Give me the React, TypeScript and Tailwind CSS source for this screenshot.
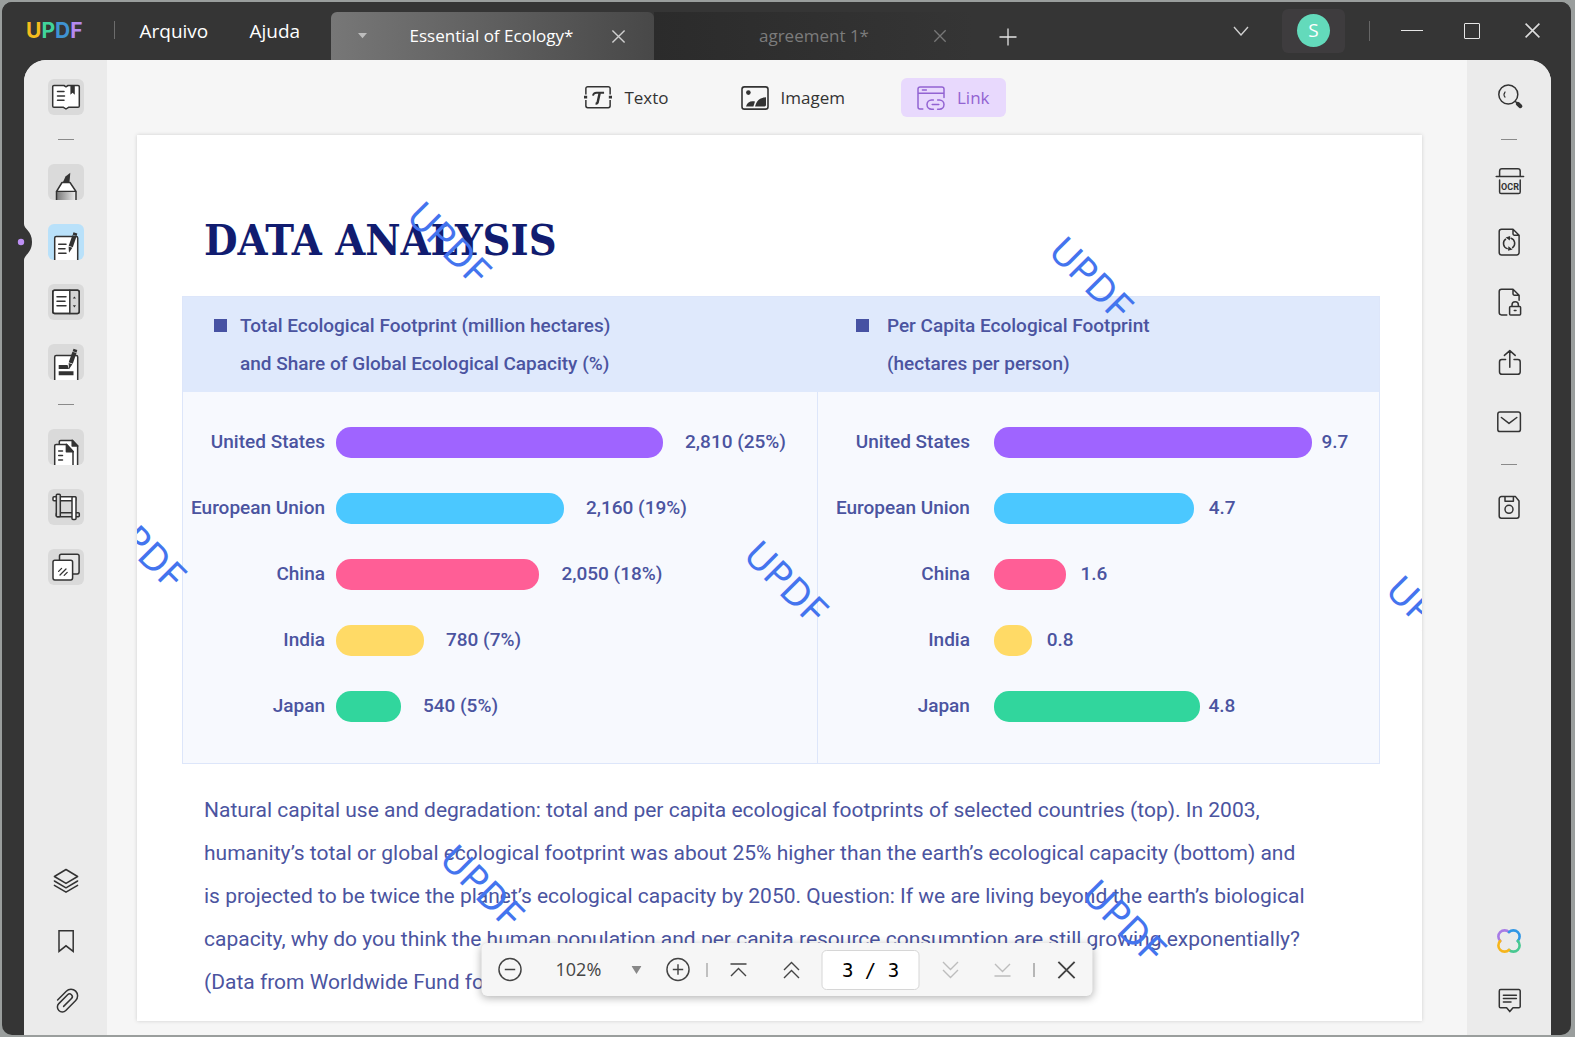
import type { ReactNode } from "react";

const INK = "#333333";

function Icon({ children, size = "size-9" }: { children: ReactNode; size?: string }) {
  return (
    <svg
      viewBox="0 0 36 36"
      className={size}
      fill="none"
      stroke={INK}
      strokeWidth="1.5"
      strokeLinecap="round"
      strokeLinejoin="round"
      aria-hidden="true"
    >
      {children}
    </svg>
  );
}

function Pen({ dy = 0 }: { dy?: number }) {
  return (
    <g transform={`translate(0 ${dy})`} fill={INK} stroke="none">
      <path d="M25.5 8.2 29.3 9.4 28.6 12 24.7 10.8Z" />
      <path d="M24.4 11.2 28.5 12.4 24.8 23.2 20.7 21.8Z" />
      <path d="M20.6 22.4 24.4 23.8 21 28.8Z" />
    </g>
  );
}

const leftTools: { label: string; active?: boolean; dividerAfter?: boolean; art: ReactNode }[] = [
  {
    label: "Leitor",
    dividerAfter: true,
    art: (
      <>
        <path
          d="M6 6.5H16L18 7.8 20 6.5H30a1.3 1.3 0 0 1 1.3 1.3V27a1.3 1.3 0 0 1-1.3 1.3H20.5L18 30 15.5 28.3H6A1.3 1.3 0 0 1 4.7 27V7.8A1.3 1.3 0 0 1 6 6.5Z"
          fill="#fff"
        />
        <path d="M22.4 6.5h4.4v9.3l-2.2-2-2.2 2Z" fill={INK} stroke="none" />
        <path d="M9.5 12.6H16M9.5 17H16.5M9.5 21.3H16" />
      </>
    ),
  },
  {
    label: "Comentar",
    art: (
      <>
        <defs>
          <linearGradient id="barrel" x1="0" x2="1">
            <stop offset="0" stopColor="#777" />
            <stop offset="1" stopColor="#eee" />
          </linearGradient>
        </defs>
        <path d="M15 18 17.5 12.5 22.3 8.7 21.5 18Z" fill={INK} stroke="none" />
        <path d="M14 18.5H22L28 27.5H8.5Z" fill="#fff" />
        <rect x="8.5" y="28" width="19.5" height="8" fill="url(#barrel)" stroke="none" />
        <path d="M8.5 27.5V36M28 27.5V36" strokeLinecap="butt" />
      </>
    ),
  },
  {
    label: "Editar PDF",
    active: true,
    art: (
      <>
        <path d="M6.7 36V14a1.5 1.5 0 0 1 1.5-1.5H28.2a1.5 1.5 0 0 1 1.5 1.5V36" fill="#fff" strokeLinecap="butt" />
        <path d="M10.7 20.2H18M10.7 24.8H17M10.7 29.3H18" />
        <Pen />
      </>
    ),
  },
  {
    label: "Formulário",
    art: (
      <>
        <rect x="4.8" y="6.2" width="26.4" height="23.2" rx="1.8" fill="#fff" />
        <path d="M21.8 7H30.4V28.7H21.8Z" fill="#d5d5d5" stroke="none" />
        <rect x="4.8" y="6.2" width="26.4" height="23.2" rx="1.8" />
        <path d="M21.8 6.2V29.4M9 12.7H18M9 17.2H17M9 21.8H18" />
        <path d="M24.8 14.6 26.4 12.4 28 14.6ZM24.8 21.2 26.4 23.4 28 21.2Z" fill={INK} stroke="none" />
      </>
    ),
  },
  {
    label: "Redigir",
    dividerAfter: true,
    art: (
      <>
        <path d="M6.7 36V13a1.5 1.5 0 0 1 1.5-1.5H28.2a1.5 1.5 0 0 1 1.5 1.5V36" fill="#fff" strokeLinecap="butt" />
        <path d="M10.7 21H19.5L21 25H10.7ZM10.7 27.2H25.5V31.3H10.7Z" fill={INK} stroke="none" />
        <Pen dy={-3.5} />
      </>
    ),
  },
  {
    label: "Organizar páginas",
    art: (
      <>
        <path d="M11.3 36V12.8a1.4 1.4 0 0 1 1.4-1.4H24.5L29.6 17V36" fill="#fff" strokeLinecap="butt" />
        <path d="M24.2 11.2V17H29.8Z" fill={INK} />
        <path d="M6.7 36V16.8a1.4 1.4 0 0 1 1.4-1.4H18.6L25 22.5V36" fill="#fff" strokeLinecap="butt" />
        <path d="M18.4 15.4V22.8H25.2Z" fill={INK} />
        <path d="M10.7 22H14.5M10.7 26.4H14.5M10.7 30.9H14.5" />
      </>
    ),
  },
  {
    label: "Cortar páginas",
    art: (
      <>
        <rect x="5" y="7.8" width="22.8" height="4" rx="1" fill="#fff" />
        <rect x="8.3" y="23.8" width="23" height="4" rx="1" fill="#d5d5d5" />
        <rect x="24" y="7.8" width="4" height="22.6" rx="1" fill="#fff" />
        <rect x="8.3" y="5.3" width="4" height="22.5" rx="1" fill="#d5d5d5" />
      </>
    ),
  },
  {
    label: "Marca d'água",
    art: (
      <>
        <rect x="11.5" y="5.3" width="19.6" height="19.6" rx="1.8" fill="#e6e6e6" />
        <rect x="5" y="11.3" width="19.6" height="19.6" rx="1.8" fill="#fff" />
        <path d="M10.6 22.4 13.6 19.4M12 26 18 20M16.2 26.4 19.2 23.4" strokeWidth="1.3" />
      </>
    ),
  },
];

const leftBottom: { label: string; art: ReactNode }[] = [
  {
    label: "Camadas",
    art: <path d="M18 6.5 29.6 13.5 18 20.4 6.4 13.5ZM6.4 18 18 24.8 29.6 18M6.4 22.4 18 29.2 29.6 22.4" />,
  },
  { label: "Marcadores", art: <path d="M11 7.7H25.2V28.4L18 22.8 11 28.4Z" strokeLinejoin="miter" /> },
  {
    label: "Anexos",
    art: (
      <path d="M9.6 17 18.3 8.2A6.6 6.6 0 0 1 27.7 17.5L17.8 27.5A4.9 4.9 0 0 1 10.8 20.6L19.6 11.8A2.7 2.7 0 0 1 23.5 15.6L15.6 23.4" />
    ),
  },
];

const rightTools: { label: string; dividerAfter?: boolean; art: ReactNode }[] = [
  {
    label: "Pesquisar",
    dividerAfter: true,
    art: (
      <>
        <circle cx="17.3" cy="15.5" r="9.5" />
        <path d="M14 13A4 4 0 0 0 14 18" strokeWidth="1.2" />
        <path d="M24.2 22.2 26 24" />
        <path d="M26.8 24.8 29.4 27.2" strokeWidth="4" />
      </>
    ),
  },
  {
    label: "OCR",
    art: (
      <>
        <path d="M8.6 12.6V7A2.3 2.3 0 0 1 10.9 4.8H26.9A2.3 2.3 0 0 1 29.2 7V12.6M5.2 12.6H32.6M8.6 16V28A1.6 1.6 0 0 0 10.2 29.6H27.6A1.6 1.6 0 0 0 29.2 28V16" />
        <text
          x="19"
          y="25.6"
          textAnchor="middle"
          fontFamily="Roboto, sans-serif"
          fontWeight="700"
          fontSize="9"
          fill={INK}
          stroke="none"
        >
          OCR
        </text>
      </>
    ),
  },
  {
    label: "Converter PDF",
    art: (
      <>
        <path d="M22 5.3H10.5A2.3 2.3 0 0 0 8.2 7.6V28.6A2.3 2.3 0 0 0 10.5 30.9H25.8A2.3 2.3 0 0 0 28.1 28.6V11.2ZM22 5.3V9.8A1.4 1.4 0 0 0 23.4 11.2H28.1" />
        <path d="M16.2 24.6A5.4 5.4 0 0 1 14.6 15.2M20 14.2A5.4 5.4 0 0 1 21.6 23.6" />
        <path d="M14.6 13.5 19.2 12 18.8 16.6ZM21.6 25.4 17 26.8 17.4 22.2Z" fill={INK} stroke="none" />
      </>
    ),
  },
  {
    label: "Proteger",
    art: (
      <>
        <path d="M15.8 30.9H10.5A2.3 2.3 0 0 1 8.2 28.6V7.6A2.3 2.3 0 0 1 10.5 5.3H22L28.1 11.2V16.2M22 5.3V9.8A1.4 1.4 0 0 0 23.4 11.2H28.1" />
        <rect x="18.6" y="22.4" width="11" height="8.5" rx="1" />
        <path d="M21 22.2V21A3.2 3.2 0 0 1 27.4 21V22.2M23.3 26.4H25" />
      </>
    ),
  },
  {
    label: "Compartilhar",
    art: (
      <path d="M14.6 15.6H10.8A2.3 2.3 0 0 0 8.5 17.9V28A2.3 2.3 0 0 0 10.8 30.3H26.9A2.3 2.3 0 0 0 29.2 28V17.9A2.3 2.3 0 0 0 26.9 15.6H23M18.8 23.3V6.8M13.4 11.4 18.8 6.6 24.2 11.4" />
    ),
  },
  {
    label: "Enviar por e-mail",
    dividerAfter: true,
    art: (
      <>
        <rect x="6.8" y="8" width="22.6" height="19.6" rx="2.2" />
        <path d="M10.4 13.5 18 19.4 25.8 13.5" />
      </>
    ),
  },
  {
    label: "Salvar",
    art: (
      <>
        <path d="M10.5 7.6H24.5L28 12V27A2.2 2.2 0 0 1 25.8 29.2H10.4A2.2 2.2 0 0 1 8.2 27V9.9A2.2 2.2 0 0 1 10.5 7.6ZM14 7.6V12.2H22.4V7.6" />
        <circle cx="18" cy="20.3" r="4" />
      </>
    ),
  },
];

const rightBottom: { label: string; art: ReactNode }[] = [
  {
    label: "UPDF AI",
    art: (
      <g strokeWidth="2.6">
        <path d="M9.2 18A6.2 6.2 0 1 1 18 9.2" stroke="#a77be6" />
        <path d="M18 9.2A6.2 6.2 0 1 1 26.8 18" stroke="#3097e6" />
        <path d="M26.8 18A6.2 6.2 0 1 1 18 26.8" stroke="#48c891" />
        <path d="M18 26.8A6.2 6.2 0 1 1 9.2 18" stroke="#f6b51c" />
      </g>
    ),
  },
  {
    label: "Comentários",
    art: (
      <path d="M9.6 6.6H27.9A1.3 1.3 0 0 1 29.2 7.9V23.4A1.3 1.3 0 0 1 27.9 24.7H22L18.8 28.6 15.6 24.7H9.6A1.3 1.3 0 0 1 8.3 23.4V7.9A1.3 1.3 0 0 1 9.6 6.6ZM12.4 12.2H25.4M12.4 15.6H25.4M12.4 19H20" />
    ),
  },
];

type Row = { name: string; value: string; share: number; color: string };

const total: Row[] = [
  { name: "United States", value: "2,810 (25%)", share: 68, color: "#9f64ff" },
  { name: "European Union", value: "2,160 (19%)", share: 47.4, color: "#4bc8ff" },
  { name: "China", value: "2,050 (18%)", share: 42.3, color: "#ff5e96" },
  { name: "India", value: "780 (7%)", share: 18.3, color: "#ffda66" },
  { name: "Japan", value: "540 (5%)", share: 13.5, color: "#31d69d" },
];

const perCapita: Row[] = [
  { name: "United States", value: "9.7", share: 82.7, color: "#9f64ff" },
  { name: "European Union", value: "4.7", share: 51.9, color: "#4bc8ff" },
  { name: "China", value: "1.6", share: 18.6, color: "#ff5e96" },
  { name: "India", value: "0.8", share: 9.8, color: "#ffda66" },
  { name: "Japan", value: "4.8", share: 53.4, color: "#31d69d" },
];

function BarRow({ row, label, gap }: { row: Row; label: string; gap: string }) {
  return (
    <li className="flex h-[66px] items-center">
      <span className={`shrink-0 text-right whitespace-nowrap ${label}`}>{row.name}</span>
      <div className="flex min-w-0 flex-1 items-center">
        <div
          className="h-[31px] shrink-0 rounded-[15px]"
          style={{ width: `${row.share}%`, backgroundColor: row.color }}
        />
        <span className={`whitespace-nowrap ${gap}`}>{row.value}</span>
      </div>
    </li>
  );
}

function Watermark({ place }: { place: string }) {
  return (
    <span
      className={`pointer-events-none absolute -translate-x-1/2 -translate-y-1/2 rotate-45 font-['Noto_Sans',sans-serif] text-[38px] leading-none text-[#4474ee] ${place}`}
    >
      UPDF
    </span>
  );
}

function Divider() {
  return <div className="h-px w-4 shrink-0 bg-[#8a8a8a]" />;
}

function Cross({ size, color }: { size: string; color: string }) {
  return (
    <svg viewBox="0 0 16 16" className={size} stroke={color} strokeWidth="1.5" fill="none" aria-hidden="true">
      <path d="M1.5 1.5 14.5 14.5M14.5 1.5 1.5 14.5" />
    </svg>
  );
}

function TitleBar() {
  return (
    <header className="flex h-[58px] shrink-0 items-start bg-[#353535] pr-[30px] text-[19px] text-white">
      <div className="flex h-[57px] items-center pl-6 font-['Inter',sans-serif] text-[21px] font-bold" aria-label="UPDF">
        <span className="text-[#f5bd1d]">U</span>
        <span className="text-[#41d39b]">P</span>
        <span className="text-[#3f93d3]">D</span>
        <span className="text-[#b58af0]">F</span>
      </div>
      <div className="mt-[19px] ml-8 h-[18px] w-px bg-[#6c6c6c]" />
      <button className="ml-6 h-[58px] w-[67px] text-left">Arquivo</button>
      <button className="ml-[43px] h-[58px] w-[50px] text-left">Ajuda</button>
      <div className="mt-[10px] ml-8 flex h-12 w-[323px] items-center rounded-tl-md rounded-tr-md bg-linear-to-r from-[#777777] to-[#484848] text-[17px]">
        <svg viewBox="0 0 10 8" className="ml-[27px] w-[9px]" fill="#bdbdbd" aria-hidden="true">
          <path d="M0 1H10L5 7Z" />
        </svg>
        <span className="flex-1 pl-1 text-center">Essential of Ecology*</span>
        <button aria-label="Fechar Essential of Ecology" className="mr-7">
          <Cross size="size-[15px]" color="#cfcfcf" />
        </button>
      </div>
      <div className="mt-[10px] flex h-12 w-[321px] items-center rounded-tr-md bg-linear-to-r from-[#2b2b2b] to-[#353535] text-[17px] text-[#7c7c7c]">
        <span className="flex-1 pl-10 text-center">agreement 1*</span>
        <button aria-label="Fechar agreement 1" className="mr-7">
          <Cross size="size-[14px]" color="#777777" />
        </button>
      </div>
      <button aria-label="Nova aba" className="mt-[26px] ml-6">
        <svg viewBox="0 0 18 18" className="size-[18px]" stroke="#e4e4e4" strokeWidth="1.3" aria-hidden="true">
          <path d="M9 0.5V17.5M0.5 9H17.5" />
        </svg>
      </button>
      <div className="ml-auto flex h-[57px] items-center">
        <button aria-label="Lista de abas">
          <svg viewBox="0 0 16 10" className="w-4" stroke="#cfcfcf" strokeWidth="1.4" fill="none" aria-hidden="true">
            <path d="M1 1 8 9 15 1" />
          </svg>
        </button>
        <button aria-label="Conta" className="ml-[33px] flex h-11 w-[63px] items-center justify-center rounded-md bg-[#3e3c3e]">
          <span className="flex size-[33px] items-center justify-center rounded-full bg-[#63dabb] text-[19px]">S</span>
        </button>
        <div className="ml-6 h-5 w-px bg-[#666666]" />
        <button aria-label="Minimizar" className="ml-[31px] flex h-5 w-[22px] items-center">
          <span className="h-px w-full bg-[#e6e6e6]" />
        </button>
        <button aria-label="Maximizar" className="ml-[41px] size-4 rounded-[1px] border border-[#e6e6e6]" />
        <button aria-label="Fechar" className="ml-[44px]">
          <Cross size="size-[17px]" color="#dcdcdc" />
        </button>
      </div>
    </header>
  );
}

function EditBar() {
  return (
    <div className="flex h-[75px] shrink-0 items-center justify-center gap-[40px] text-[17px] text-[#333333]">
      <button className="flex h-[39px] items-center gap-3 px-4">
        <svg viewBox="0 0 30 24" className="w-[28px]" fill="none" stroke={INK} strokeWidth="1.6" aria-hidden="true">
          <path d="M2 9V2.8A2 2 0 0 1 4 .8H26A2 2 0 0 1 28 2.8V9M2 15V21.2A2 2 0 0 0 4 23.2H26A2 2 0 0 0 28 21.2V15" />
          <path d="M0 12H3.4M26.6 12H30" strokeWidth="3" />
          <path d="M9.6 10.4C10 7.6 11.5 7.2 13.5 7.2H21.5" strokeWidth="2" />
          <path d="M16.8 7.4 14.6 17.8C14.4 18.8 13.4 18.8 12.4 18.6" strokeWidth="2.6" />
        </svg>
        Texto
      </button>
      <button className="flex h-[39px] items-center gap-3 px-4">
        <svg viewBox="0 0 28 24" className="w-7" fill="none" stroke={INK} strokeWidth="1.6" aria-hidden="true">
          <rect x="1" y=".9" width="26" height="22.2" rx="2.4" />
          <circle cx="7.4" cy="6.6" r="2.3" fill={INK} stroke="none" />
          <path d="M5 20.4C6.4 15.8 10 14.6 14 15.6L12.4 20.4Z" fill={INK} stroke="none" />
          <path d="M14 20.4C15.6 14.4 19 11.4 25 11.2V19A1.4 1.4 0 0 1 23.6 20.4Z" fill={INK} stroke="none" />
        </svg>
        Imagem
      </button>
      <button className="flex h-[39px] items-center gap-3 rounded-md bg-[#e8d9fd] px-4 text-[#9263d2]">
        <svg viewBox="0 0 28 24" className="w-7" fill="none" stroke="#9263d2" strokeWidth="1.5" strokeLinecap="round" aria-hidden="true">
          <path d="M5.8 23H3A2 2 0 0 1 1 21V3A2.2 2.2 0 0 1 3.2.9H24.8A2.2 2.2 0 0 1 27 3V11.4M1 7.2H27M5.4 4H9.4" />
          <path d="M16.4 14H14.6A4.6 4.6 0 0 0 14.6 23.2H16.4M20.6 14H22.4A4.6 4.6 0 0 1 22.4 23.2H20.6M15.2 18.6H21.8" />
        </svg>
        Link
      </button>
    </div>
  );
}

function PageControls() {
  return (
    <div className="absolute bottom-[39px] left-1/2 flex h-[53px] -translate-x-1/2 items-center rounded-md bg-[#f6f6f6] pr-4 pl-4 text-[#444444] shadow-[0_2px_8px_rgba(0,0,0,0.3)]">
      <button aria-label="Diminuir zoom">
        <svg viewBox="0 0 24 24" className="size-[25px]" fill="none" stroke="#444" strokeWidth="1.4" aria-hidden="true">
          <circle cx="12" cy="12" r="10.6" />
          <path d="M7 12H17" />
        </svg>
      </button>
      <button className="ml-[33px] flex items-center gap-7 text-[18px]">
        <span className="w-[48px] text-left">102%</span>
        <svg viewBox="0 0 10 8" className="w-[10px]" fill="#888" aria-hidden="true">
          <path d="M0 0H10L5 8Z" />
        </svg>
      </button>
      <button aria-label="Aumentar zoom" className="ml-6">
        <svg viewBox="0 0 24 24" className="size-[25px]" fill="none" stroke="#444" strokeWidth="1.4" aria-hidden="true">
          <circle cx="12" cy="12" r="10.6" />
          <path d="M7 12H17M12 7V17" />
        </svg>
      </button>
      <div className="ml-4 h-[14px] w-px bg-[#8a8a8a]" />
      <button aria-label="Primeira página" className="ml-[22px]">
        <svg viewBox="0 0 18 16" className="w-[18px]" fill="none" stroke="#444" strokeWidth="1.4" aria-hidden="true">
          <path d="M1 2H17M1.5 14 9 6.5 16.5 14" />
        </svg>
      </button>
      <button aria-label="Página anterior" className="ml-[35px]">
        <svg viewBox="0 0 18 18" className="w-[18px]" fill="none" stroke="#444" strokeWidth="1.4" aria-hidden="true">
          <path d="M1.5 9 9 1.5 16.5 9M1.5 17 9 9.5 16.5 17" />
        </svg>
      </button>
      <input
        aria-label="Página"
        defaultValue="3 / 3"
        className="ml-[21px] h-10 w-[98px] rounded-[5px] border border-[#d6d6d6] bg-white text-center font-['DejaVu_Sans_Mono',monospace] text-[19px] text-black"
      />
      <button aria-label="Próxima página" className="ml-[22px]">
        <svg viewBox="0 0 18 18" className="w-[18px]" fill="none" stroke="#bdbdbd" strokeWidth="1.4" aria-hidden="true">
          <path d="M1.5 1 9 8.5 16.5 1M1.5 9 9 16.5 16.5 9" />
        </svg>
      </button>
      <button aria-label="Última página" className="ml-[34px]">
        <svg viewBox="0 0 18 16" className="w-[18px]" fill="none" stroke="#bdbdbd" strokeWidth="1.4" aria-hidden="true">
          <path d="M1.5 2 9 9.5 16.5 2M1 14H17" />
        </svg>
      </button>
      <div className="ml-[22px] h-[14px] w-px bg-[#777777]" />
      <button aria-label="Fechar controles" className="ml-[22px]">
        <Cross size="size-[20px]" color="#444444" />
      </button>
    </div>
  );
}

const paragraph = [
  "Natural capital use and degradation: total and per capita ecological footprints of selected countries (top). In 2003,",
  "humanity’s total or global ecological footprint was about 25% higher than the earth’s ecological capacity (bottom) and",
  "is projected to be twice the planet’s ecological capacity by 2050. Question: If we are living beyond the earth’s biological",
  "capacity, why do you think the human population and per capita resource consumption are still growing exponentially?",
  "(Data from Worldwide Fund for Nature)",
];

function DocumentPage() {
  return (
    <article className="relative mr-[45px] ml-[30px] min-h-0 flex-1 overflow-hidden bg-white pt-[79px] pr-[42px] pl-[45px] font-['Roboto',sans-serif] text-[#4b54a0] shadow-[0_0_4px_rgba(0,0,0,0.16)]">
      <h1 className="pl-[22px] font-['DejaVu_Serif_Condensed','DejaVu_Serif',serif] text-[43px] leading-[52px] font-bold whitespace-nowrap text-[#111c70]">
        DATA ANALYSIS
      </h1>
      <section className="mt-[30px] border border-[#dde6fa] bg-[#f7f9fe] text-[19px] font-medium">
        <div className="grid h-[95px] grid-cols-[636fr_562fr] bg-[#dfe9fc] pt-[10px] leading-[38px]">
          <h2 className="flex gap-[13px] pl-[31px]">
            <span className="mt-3 size-[13px] shrink-0 bg-[#4752a3]" />
            <span>
              Total Ecological Footprint (million hectares)
              <br />
              and Share of Global Ecological Capacity (%)
            </span>
          </h2>
          <h2 className="flex gap-[18px] pl-[38px]">
            <span className="mt-3 size-[13px] shrink-0 bg-[#4752a3]" />
            <span>
              Per Capita Ecological Footprint
              <br />
              (hectares per person)
            </span>
          </h2>
        </div>
        <div className="grid grid-cols-[636fr_562fr]">
          <ul className="border-r border-[#dde6fa] pt-[17px] pb-[24px]">
            {total.map((row) => (
              <BarRow key={row.name} row={row} label="w-[142px] mr-[11px]" gap="ml-[22px]" />
            ))}
          </ul>
          <ul className="pt-[17px] pb-[24px]">
            {perCapita.map((row) => (
              <BarRow key={row.name} row={row} label="w-[152px] mr-6" gap={row.share > 52 ? "ml-[9px]" : "ml-[15px]"} />
            ))}
          </ul>
        </div>
      </section>
      <p className="mt-[25px] pl-[22px] text-[21px] leading-[43px] whitespace-nowrap">
        {paragraph.map((line) => (
          <span key={line} className="block">
            {line}
          </span>
        ))}
      </p>
      <Watermark place="top-[107px] left-[313px]" />
      <Watermark place="top-[142px] left-[955px]" />
      <Watermark place="top-[411px] left-[8px]" />
      <Watermark place="top-[446px] left-[650px]" />
      <Watermark place="top-[481px] left-[1292px]" />
      <Watermark place="top-[750px] left-[346px]" />
      <Watermark place="top-[785px] left-[988px]" />
    </article>
  );
}

export default function App() {
  return (
    <div className="h-screen bg-[#9a9e9d] pt-[2px] pr-1 pb-[2px] pl-[2px] font-['Open_Sans','Noto_Sans',sans-serif]">
      <div className="flex h-full flex-col overflow-hidden rounded-[10px] bg-[#353535]">
        <TitleBar />
        <div className="relative mr-5 ml-[22px] flex min-h-0 flex-1 rounded-t-[22px] bg-[#f6f6f6]">
          <svg viewBox="0 0 16 36" className="absolute top-[164px] -left-[8px] w-4" aria-hidden="true">
            <path d="M8 0C8 5 16 7 16 18S8 31 8 36Z" fill="#353535" />
            <circle cx="5" cy="18" r="3.2" fill="#be90f5" />
          </svg>
          <nav className="flex w-[83px] shrink-0 flex-col items-center gap-6 rounded-tl-[22px] bg-[#ebebeb] pt-[19px] pb-4">
            {leftTools.map((tool) => (
              <div key={tool.label} className="contents">
                <button
                  aria-label={tool.label}
                  className={tool.active ? "rounded-md bg-[#b9e1fa]" : "rounded-md bg-[#dadada]"}
                >
                  <Icon>{tool.art}</Icon>
                </button>
                {tool.dividerAfter && <Divider />}
              </div>
            ))}
            <div className="mt-auto flex flex-col gap-6">
              {leftBottom.map((tool) => (
                <button key={tool.label} aria-label={tool.label}>
                  <Icon>{tool.art}</Icon>
                </button>
              ))}
            </div>
          </nav>
          <main className="relative flex min-w-0 flex-1 flex-col pb-[14px]">
            <EditBar />
            <DocumentPage />
            <PageControls />
          </main>
          <nav className="flex w-[84px] shrink-0 flex-col items-center gap-6 rounded-tr-[22px] bg-[#ebebeb] pt-[19px] pb-4">
            {rightTools.map((tool) => (
              <div key={tool.label} className="contents">
                <button aria-label={tool.label}>
                  <Icon>{tool.art}</Icon>
                </button>
                {tool.dividerAfter && <Divider />}
              </div>
            ))}
            <div className="mt-auto flex flex-col gap-6">
              {rightBottom.map((tool) => (
                <button key={tool.label} aria-label={tool.label}>
                  <Icon>{tool.art}</Icon>
                </button>
              ))}
            </div>
          </nav>
        </div>
      </div>
    </div>
  );
}
